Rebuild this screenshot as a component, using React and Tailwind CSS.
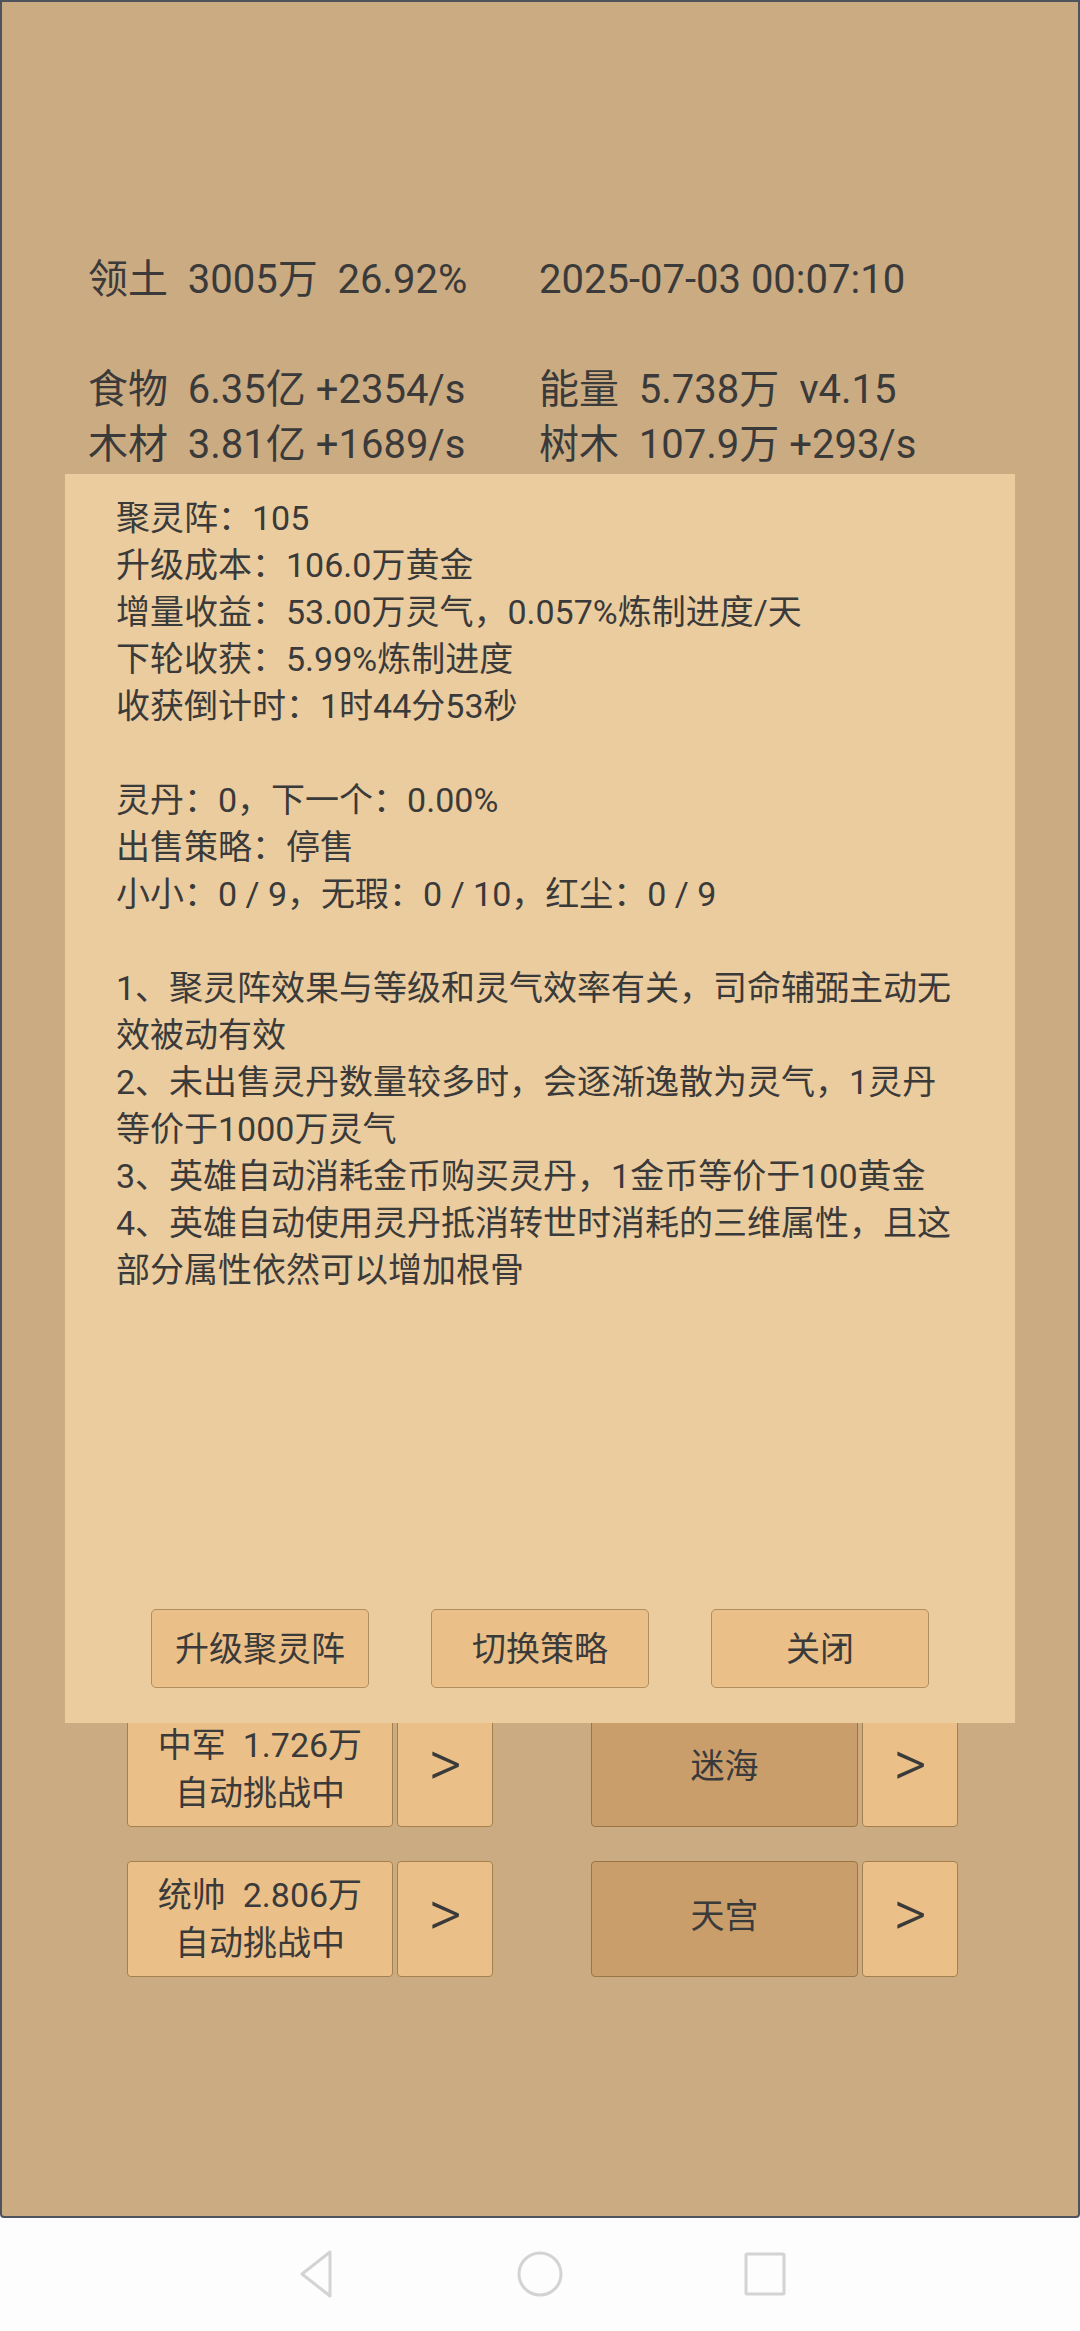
import React from "react";

const stats = [
  ["领土  3005万  26.92%", "2025-07-03 00:07:10"],
  null,
  ["食物  6.35亿 +2354/s", "能量  5.738万  v4.15"],
  ["木材  3.81亿 +1689/s", "树木  107.9万 +293/s"],
];

const info = [
  "聚灵阵：105",
  "升级成本：106.0万黄金",
  "增量收益：53.00万灵气，0.057%炼制进度/天",
  "下轮收获：5.99%炼制进度",
  "收获倒计时：1时44分53秒",
  "",
  "灵丹：0，下一个：0.00%",
  "出售策略：停售",
  "小小：0 / 9，无瑕：0 / 10，红尘：0 / 9",
  "",
  "1、聚灵阵效果与等级和灵气效率有关，司命辅弼主动无效被动有效",
  "2、未出售灵丹数量较多时，会逐渐逸散为灵气，1灵丹等价于1000万灵气",
  "3、英雄自动消耗金币购买灵丹，1金币等价于100黄金",
  "4、英雄自动使用灵丹抵消转世时消耗的三维属性，且这部分属性依然可以增加根骨",
];

const rows = [
  { left: ["中军  1.726万", "自动挑战中"], right: "迷海" },
  { left: ["统帅  2.806万", "自动挑战中"], right: "天宫" },
];

const App = () => {
  return (
    <div className="w-[1080px] h-[2331px] flex flex-col bg-[#fdfdfd] font-['Roboto','Noto_Sans_CJK_SC',sans-serif] text-[#3a3a3a]">
      <div className="relative h-[2218px] border-2 border-[#4f535e] rounded-b-[4px] bg-[#cbab82] overflow-hidden">
        {/* resource stats */}
        <div className="pt-[250px] pl-[86px] text-[40px] leading-[55px] whitespace-pre">
          {stats.map((row, i) =>
            row ? (
              <div key={i} className="flex">
                <div className="w-[451px]">{row[0]}</div>
                <div>{row[1]}</div>
              </div>
            ) : (
              <div key={i} className="h-[55px]" />
            )
          )}
        </div>

        {/* battle rows */}
        <div className="mt-[1239px] pl-[125px] flex flex-col gap-[34px]">
          {rows.map((r) => (
            <div key={r.right} className="flex h-[116px]">
              <div className="flex gap-[4px]">
                <button className="w-[266px] h-full bg-[#ebc088] border border-[#a5804f] rounded-[4px] flex flex-col items-center justify-center text-[34px] leading-[48px] whitespace-pre">
                  <span>{r.left[0]}</span>
                  <span>{r.left[1]}</span>
                </button>
                <button className="w-[96px] h-full bg-[#ebc088] border border-[#a5804f] rounded-[4px] text-[64px] font-light leading-none pb-[8px]">
                  &gt;
                </button>
              </div>
              <div className="flex gap-[4px] ml-[98px]">
                <button className="w-[267px] h-full bg-[#c99e6b] border border-[#9a7647] rounded-[4px] text-[34px] leading-[48px] pb-[6px]">
                  {r.right}
                </button>
                <button className="w-[96px] h-full bg-[#ebc088] border border-[#a5804f] rounded-[4px] text-[64px] font-light leading-none pb-[8px]">
                  &gt;
                </button>
              </div>
            </div>
          ))}
        </div>

        {/* info dialog */}
        <div className="absolute left-[63px] top-[472px] w-[950px] h-[1249px] bg-[#ebcc9e] flex flex-col px-[51px] pt-[21px] pb-[35px]">
          <div className="text-[34px] leading-[47px]">
            {info.map((line, i) =>
              line ? <div key={i}>{line}</div> : <div key={i} className="h-[47px]" />
            )}
          </div>
          <div className="mt-auto flex justify-center gap-[62px]">
            {["升级聚灵阵", "切换策略", "关闭"].map((t) => (
              <button
                key={t}
                className="w-[218px] h-[79px] bg-[#ebc088] border border-[#b08d5d] rounded-[5px] text-[34px] leading-none"
              >
                {t}
              </button>
            ))}
          </div>
        </div>
      </div>

      {/* system nav bar */}
      <div className="flex-1 flex items-center justify-center gap-[180px] pb-[2px]">
        <svg width="44" height="48" viewBox="0 0 44 48" fill="none" stroke="#d3d3d3" strokeWidth="3" strokeLinejoin="round">
          <path d="M37 2 L37 46 L9 24 Z" />
        </svg>
        <svg width="46" height="48" viewBox="0 0 46 48" fill="none" stroke="#d3d3d3" strokeWidth="3">
          <circle cx="23" cy="24" r="21" />
        </svg>
        <svg width="44" height="48" viewBox="0 0 44 48" fill="none" stroke="#d3d3d3" strokeWidth="3">
          <rect x="3" y="4" width="38" height="40" rx="1" />
        </svg>
      </div>
    </div>
  );
};

export default App;
